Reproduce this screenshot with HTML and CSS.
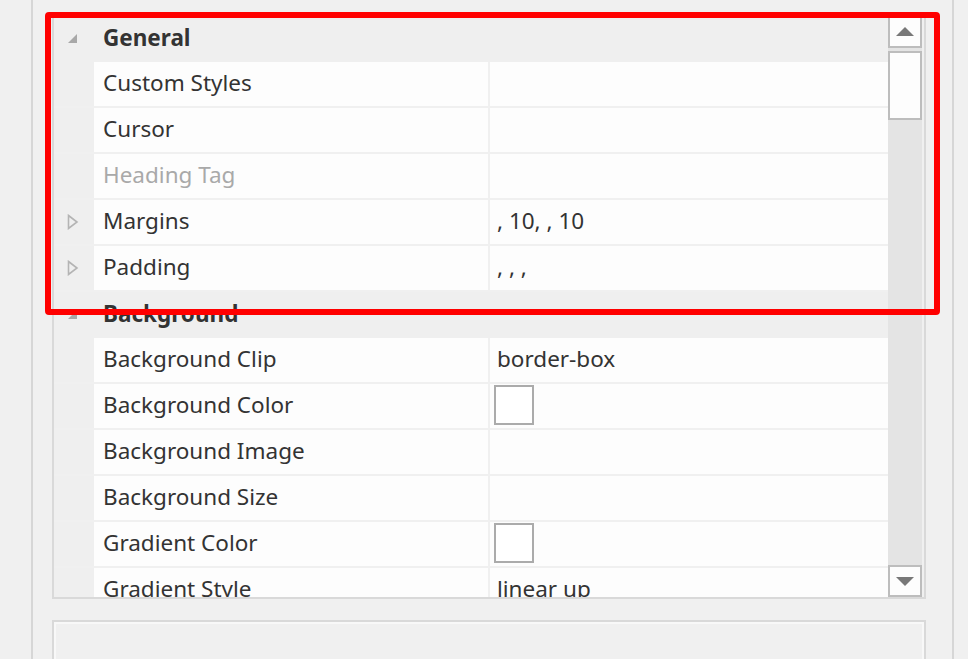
FILE: index.html
```html
<!DOCTYPE html>
<html lang="en">
<head>
    <meta charset="UTF-8">
    <title>Properties</title>
    <link rel="stylesheet" href="styles.css">
</head>
<body>

    <div class="frame">
        <div class="grid">
            <div class="rows">
                <div class="cat">
                    <span class="glyph"><svg width="12" height="12" viewBox="0 0 12 12"><path d="M10 1 L10 10 L1 10 Z" fill="#a8a8a8"/></svg></span>
                    <span class="cat-name">General</span>
                </div>
                <div class="row">
                    <span class="glyph"></span>
                    <span class="name">Custom Styles</span>
                    <span class="value"></span>
                </div>
                <div class="row">
                    <span class="glyph"></span>
                    <span class="name">Cursor</span>
                    <span class="value"></span>
                </div>
                <div class="row">
                    <span class="glyph"></span>
                    <span class="name disabled">Heading Tag</span>
                    <span class="value"></span>
                </div>
                <div class="row">
                    <span class="glyph"><svg width="12" height="16" viewBox="0 0 12 16"><path d="M1.5 1.5 L10 8 L1.5 14.5 Z" fill="none" stroke="#b4b4b4" stroke-width="1.6"/></svg></span>
                    <span class="name">Margins</span>
                    <span class="value">, 10, , 10</span>
                </div>
                <div class="row">
                    <span class="glyph"><svg width="12" height="16" viewBox="0 0 12 16"><path d="M1.5 1.5 L10 8 L1.5 14.5 Z" fill="none" stroke="#b4b4b4" stroke-width="1.6"/></svg></span>
                    <span class="name">Padding</span>
                    <span class="value">, , ,</span>
                </div>
                <div class="cat">
                    <span class="glyph"><svg width="12" height="12" viewBox="0 0 12 12"><path d="M10 1 L10 10 L1 10 Z" fill="#a8a8a8"/></svg></span>
                    <span class="cat-name">Background</span>
                </div>
                <div class="row">
                    <span class="glyph"></span>
                    <span class="name">Background Clip</span>
                    <span class="value">border-box</span>
                </div>
                <div class="row">
                    <span class="glyph"></span>
                    <span class="name">Background Color</span>
                    <span class="value"><span class="swatch"></span></span>
                </div>
                <div class="row">
                    <span class="glyph"></span>
                    <span class="name">Background Image</span>
                    <span class="value"></span>
                </div>
                <div class="row">
                    <span class="glyph"></span>
                    <span class="name">Background Size</span>
                    <span class="value"></span>
                </div>
                <div class="row">
                    <span class="glyph"></span>
                    <span class="name">Gradient Color</span>
                    <span class="value"><span class="swatch"></span></span>
                </div>
                <div class="row">
                    <span class="glyph"></span>
                    <span class="name">Gradient Style</span>
                    <span class="value">linear up</span>
                </div>
            </div>

            <div class="scrollbar">
                <div class="sb-btn">
                    <svg width="18" height="10" viewBox="0 0 18 10"><path d="M9 0 L18 9 L0 9 Z" fill="#787878"/></svg>
                </div>
                <div class="sb-track">
                    <div class="sb-thumb"></div>
                </div>
                <div class="sb-btn">
                    <svg width="18" height="10" viewBox="0 0 18 10"><path d="M0 1 L18 1 L9 10 Z" fill="#787878"/></svg>
                </div>
            </div>
        </div>

        <div class="desc"></div>
    </div>

    <div class="highlight"></div>

</body>
</html>
```

FILE: styles.css
```css
body {
    margin: 0;
    width: 968px;
    height: 659px;
    overflow: hidden;
    background-color: #f0f0f0;
    font-family: "Noto Sans", "Open Sans", sans-serif;
    font-size: 22.5px;
    color: #333333;
    position: relative;
}

.frame {
    margin-left: 31px;
    width: 923px;
    height: 659px;
    border-left: 2px solid #d6d6d6;
    border-right: 2px solid #d6d6d6;
    padding: 16px 0 0 19px;
    box-sizing: border-box;
}

.grid {
    width: 874px;
    height: 583px;
    border: 2px solid #d9d9d9;
    border-top: none;
    display: flex;
    background-color: #f0f0f0;
    box-sizing: border-box;
}

.rows {
    flex: 1;
    overflow: hidden;
}

.cat {
    height: 46px;
    display: flex;
    align-items: center;
    background-color: #efefef;
}

.cat-name {
    font-weight: bold;
    padding: 0 0 4px 9px;
}

.glyph {
    width: 40px;
    flex: none;
    display: flex;
    align-items: center;
    justify-content: center;
    padding-right: 2px;
    box-sizing: border-box;
}

.row {
    height: 44px;
    margin-bottom: 2px;
    display: grid;
    grid-template-columns: 40px 396px 1fr;
}

.row .glyph {
    background-color: #efefef;
}

.name {
    background-color: #fdfdfd;
    padding: 0 0 3px 9px;
    border-right: 2px solid #f0f0f0;
    display: flex;
    align-items: center;
    white-space: nowrap;
}

.disabled {
    color: #a9a9a9;
}

.value {
    background-color: #fdfdfd;
    padding: 0 0 3px 7px;
    display: flex;
    align-items: center;
    white-space: nowrap;
}

.swatch {
    width: 36px;
    height: 36px;
    border: 2px solid #ababab;
    background: #ffffff;
    margin: 1px 0 0 -3px;
}

.scrollbar {
    width: 34px;
    margin-right: 2px;
    display: flex;
    flex-direction: column;
    background-color: #e4e4e4;
}

.sb-btn {
    height: 32px;
    border: 2px solid #bdbdbd;
    background-color: #fdfdfd;
    display: flex;
    align-items: center;
    justify-content: center;
    box-sizing: border-box;
}

.sb-track {
    flex: 1;
    padding-top: 3px;
}

.sb-thumb {
    height: 69px;
    border: 2px solid #bdbdbd;
    background-color: #fdfdfd;
    box-sizing: border-box;
}

.desc {
    margin-top: 21px;
    width: 874px;
    height: 60px;
    border: 2px solid #d9d9d9;
    box-shadow: inset 0 0 0 2px #f8f8f8;
    box-sizing: border-box;
}

.highlight {
    position: absolute;
    left: 45px;
    top: 12px;
    width: 895px;
    height: 303px;
    border: 6px solid #ff0000;
    border-radius: 4px;
    box-sizing: border-box;
}
```
